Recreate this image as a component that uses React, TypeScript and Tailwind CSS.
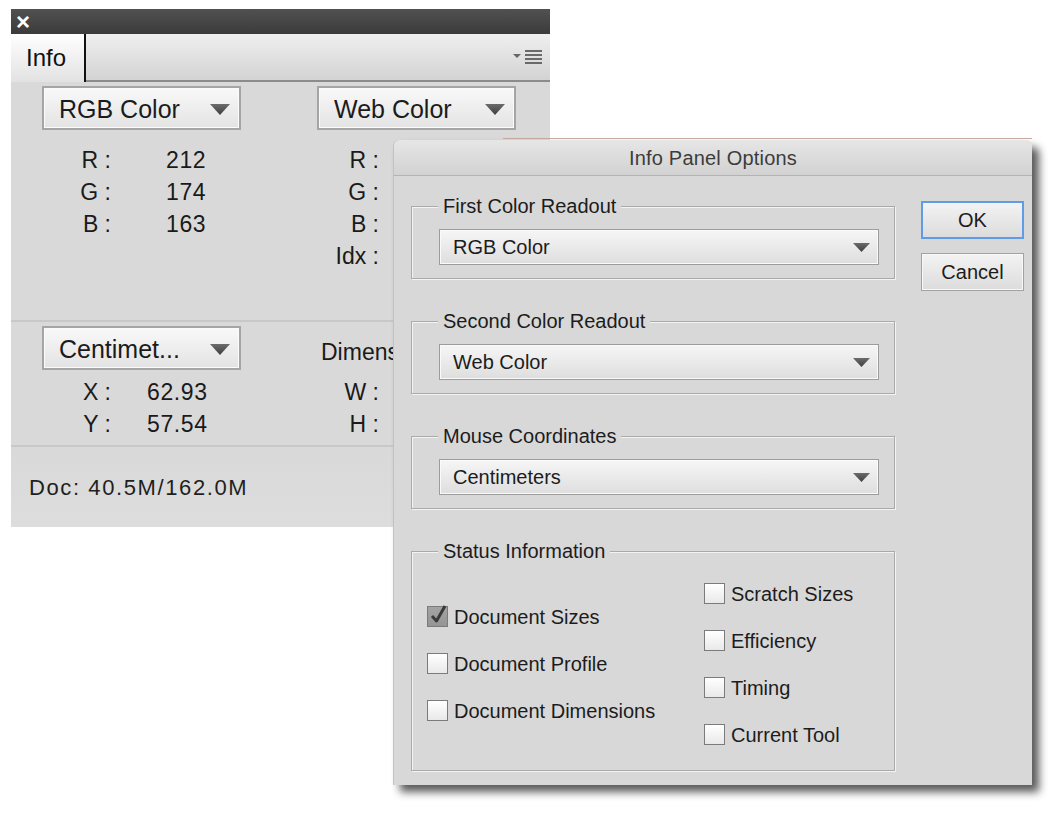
import clsx from "clsx";

const FONT = "font-['Liberation_Sans',Arial,sans-serif]";

function Caret({ w, h }: { w: number; h: number }) {
  return (
    <svg width={w} height={h} viewBox="0 0 20 10" preserveAspectRatio="none">
      <defs>
        <linearGradient id="caretFill" x1="0" y1="0" x2="0" y2="1">
          <stop offset="0" stopColor="#6b6b6b" />
          <stop offset="1" stopColor="#3f3f3f" />
        </linearGradient>
      </defs>
      <polygon points="0,0 20,0 10,10" fill="url(#caretFill)" />
    </svg>
  );
}

function PanelSelect({ label }: { label: string }) {
  return (
    <div className="flex h-[44px] w-[199px] items-center justify-between border-2 border-[#a5a5a5] bg-gradient-to-b from-[#f9f9f9] to-[#e3e3e3] pl-[15px] pr-[9px] pt-[3px] text-[25px] text-[#1b1b1b] shadow-[inset_0_0_0_1px_#fbfbfb]">
      <span>{label}</span>
      <Caret w={20} h={11} />
    </div>
  );
}

function Readout({ k, v, labelW, gap }: { k: string; v?: string; labelW: string; gap?: string }) {
  return (
    <div className="flex h-[32px] items-center text-[23px] text-[#1a1a1a]">
      <span className={clsx("shrink-0 text-right whitespace-pre", labelW)}>{k}</span>
      {v && <span className={clsx("tracking-[0.6px]", gap)}>{v}</span>}
    </div>
  );
}

function InfoPanel() {
  return (
    <div className="absolute left-[11px] top-[9px] flex h-[518px] w-[539px] flex-col bg-[#d9d9d9]">
      {/* title strip */}
      <div className="flex h-[25px] items-center bg-gradient-to-b from-[#515151] to-[#3b3b3b] pl-[5px] text-[24px] font-bold leading-none text-white">
        ×
      </div>
      {/* tab row */}
      <div className="flex h-[48px]">
        <div className="flex w-[75px] items-center border-r-2 border-[#111] bg-gradient-to-b from-[#ffffff] to-[#e2e2e2] pl-[15px] text-[24px] text-[#111]">
          Info
        </div>
        <div className="flex flex-1 items-center justify-end border-b-2 border-[#8c8c8c] bg-gradient-to-b from-[#efefef] to-[#d3d3d3] pr-[8px]">
          <svg width="29" height="14" viewBox="0 0 29 14">
            <polygon points="0,4 8,4 4,8" fill="#666" />
            <rect x="12" y="0" width="17" height="2" fill="#6a6a6a" />
            <rect x="12" y="4" width="17" height="2" fill="#6a6a6a" />
            <rect x="12" y="8" width="17" height="2" fill="#6a6a6a" />
            <rect x="12" y="12" width="17" height="2" fill="#6a6a6a" />
          </svg>
        </div>
      </div>

      {/* color readouts */}
      <div className="flex h-[238px] pt-[4px]">
        <div className="w-[275px] pl-[31px]">
          <PanelSelect label="RGB Color" />
          <div className="mt-[14px]">
            <Readout k="R :" v="212" labelW="w-[69px]" gap="ml-[55px]" />
            <Readout k="G :" v="174" labelW="w-[69px]" gap="ml-[55px]" />
            <Readout k="B :" v="163" labelW="w-[69px]" gap="ml-[55px]" />
          </div>
        </div>
        <div className="pl-[31px]">
          <PanelSelect label="Web Color" />
          <div className="mt-[14px]">
            <Readout k="R :" labelW="w-[62px]" />
            <Readout k="G :" labelW="w-[62px]" />
            <Readout k="B :" labelW="w-[62px]" />
            <Readout k="Idx :" labelW="w-[62px]" />
          </div>
        </div>
      </div>
      <div className="h-[2px] bg-[#c8c8c8]" />

      {/* coordinates */}
      <div className="flex h-[123px] pt-[4px]">
        <div className="w-[275px] pl-[31px]">
          <PanelSelect label="Centimet..." />
          <div className="mt-[6px]">
            <Readout k="X :" v="62.93" labelW="w-[69px]" gap="ml-[36px]" />
            <Readout k="Y :" v="57.54" labelW="w-[69px]" gap="ml-[36px]" />
          </div>
        </div>
        <div className="pl-[35px]">
          <div className="flex h-[44px] items-end pb-[1px] text-[23px] text-[#1a1a1a]">Dimensions</div>
          <div className="mt-[6px]">
            <Readout k="W :" labelW="w-[58px]" />
            <Readout k="H :" labelW="w-[58px]" />
          </div>
        </div>
      </div>
      <div className="h-[2px] bg-[#c8c8c8]" />

      <div className="flex flex-1 items-center bg-gradient-to-b from-[#d9d9d9] to-[#dddddd] pl-[18px] text-[22px] tracking-[1.6px] text-[#1f1f1f]">
        Doc: 40.5M/162.0M
      </div>
    </div>
  );
}

function DialogSelect({ label }: { label: string }) {
  return (
    <div className="flex h-[36px] items-center justify-between border border-[#9c9c9c] bg-gradient-to-b from-[#f6f6f6] to-[#dedede] pl-[13px] pr-[8px] text-[20px] text-[#1c1c1c] shadow-[inset_0_0_0_1px_#fafafa]">
      <span>{label}</span>
      <Caret w={17} h={9} />
    </div>
  );
}

function Group({ title, children }: { title: string; children: React.ReactNode }) {
  return (
    <fieldset className="border border-[#aaaaaa] shadow-[inset_1px_1px_0_#f3f3f3,1px_1px_0_#f3f3f3]">
      <legend className="ml-[26px] bg-[#d8d8d8] px-[5px] text-[20px] leading-[24px] text-[#1c1c1c]">{title}</legend>
      {children}
    </fieldset>
  );
}

function Check({ label, checked }: { label: string; checked?: boolean }) {
  return (
    <div className="flex h-[47px] items-center gap-[6px] text-[20px] text-[#1c1c1c]">
      <span
        className={clsx(
          "relative h-[21px] w-[21px] shrink-0 border border-[#7b7b7b]",
          checked ? "bg-gradient-to-b from-[#a3a3a3] to-[#959595]" : "bg-gradient-to-b from-[#ffffff] to-[#e9e9e9]"
        )}
      >
        {checked && (
          <svg className="absolute left-[2px] top-[-3px]" width="17" height="21" viewBox="0 0 17 21">
            <path d="M2 12 L6.5 17 L15 2" fill="none" stroke="#3a3a3a" strokeWidth="3" strokeLinejoin="round" />
          </svg>
        )}
      </span>
      <span>{label}</span>
    </div>
  );
}

function OptionsDialog() {
  return (
    <div className="absolute left-[393px] top-[140px] flex h-[645px] w-[639px] flex-col rounded-t-[6px] border-l border-[#c2c2c2] bg-[#d8d8d8] shadow-[7px_7px_8px_rgba(0,0,0,0.65)]">
      <div className="flex h-[36px] items-center justify-center rounded-t-[6px] border-b border-[#b3b3b3] bg-gradient-to-b from-[#e6e6e6] to-[#d2d2d2] text-[20px] tracking-[0.2px] text-[#3c3c3c]">
        Info Panel Options
      </div>
      <div className="flex flex-1 pl-[17px] pt-[18px]">
        <div className="flex w-[484px] flex-col gap-[30px]">
          <Group title="First Color Readout">
            <div className="pb-[13px] pl-[27px] pr-[15px] pt-[11px]">
              <DialogSelect label="RGB Color" />
            </div>
          </Group>
          <Group title="Second Color Readout">
            <div className="pb-[13px] pl-[27px] pr-[15px] pt-[11px]">
              <DialogSelect label="Web Color" />
            </div>
          </Group>
          <Group title="Mouse Coordinates">
            <div className="pb-[13px] pl-[27px] pr-[15px] pt-[11px]">
              <DialogSelect label="Centimeters" />
            </div>
          </Group>
          <Group title="Status Information">
            <div className="flex pb-[12px] pl-[15px]">
              <div className="w-[277px] pt-[30px]">
                <Check label="Document Sizes" checked />
                <Check label="Document Profile" />
                <Check label="Document Dimensions" />
              </div>
              <div className="pt-[7px]">
                <Check label="Scratch Sizes" />
                <Check label="Efficiency" />
                <Check label="Timing" />
                <Check label="Current Tool" />
              </div>
            </div>
          </Group>
        </div>
        <div className="ml-[26px] flex w-[103px] flex-col gap-[14px] pt-[7px]">
          <button className="h-[38px] border-2 border-[#5e9ce6] bg-gradient-to-b from-[#f3f3f3] to-[#dcdcdc] text-[20px] text-[#1c1c1c]">
            OK
          </button>
          <button className="h-[38px] border border-[#a2a2a2] bg-gradient-to-b from-[#f3f3f3] to-[#dcdcdc] text-[20px] text-[#1c1c1c] shadow-[inset_0_0_0_1px_#f8f8f8]">
            Cancel
          </button>
        </div>
      </div>
    </div>
  );
}

export default function App() {
  return (
    <div className={clsx("relative h-[822px] w-[1063px] overflow-hidden bg-white", FONT)}>
      <InfoPanel />
      <div className="absolute left-[503px] top-[138px] h-[1px] w-[529px] bg-[#c9aba2]" />
      <OptionsDialog />
    </div>
  );
}
